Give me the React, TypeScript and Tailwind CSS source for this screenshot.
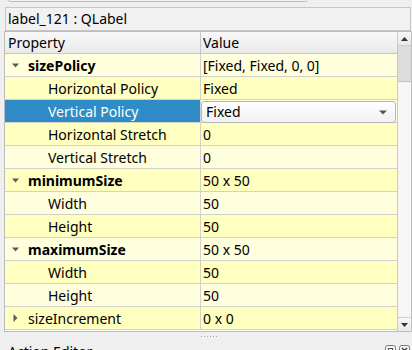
import React from "react"

type Row = {
    name: string
    value: string
    group?: "open" | "closed"
    bold?: boolean
    selected?: boolean
}

const rows: Row[] = [
    { name: "sizePolicy", value: "[Fixed, Fixed, 0, 0]", group: "open", bold: true },
    { name: "Horizontal Policy", value: "Fixed" },
    { name: "Vertical Policy", value: "Fixed", selected: true },
    { name: "Horizontal Stretch", value: "0" },
    { name: "Vertical Stretch", value: "0" },
    { name: "minimumSize", value: "50 x 50", group: "open", bold: true },
    { name: "Width", value: "50" },
    { name: "Height", value: "50" },
    { name: "maximumSize", value: "50 x 50", group: "open", bold: true },
    { name: "Width", value: "50" },
    { name: "Height", value: "50" },
    { name: "sizeIncrement", value: "0 x 0", group: "closed" },
]

function Arrow({ open }: { open: boolean }) {
    return open ? (
        <svg width="7" height="5" viewBox="0 0 7 5" className="block">
            <path d="M0 0.5 L7 0.5 L3.5 4.5 Z" fill="#5c5c5c" />
        </svg>
    ) : (
        <svg width="5" height="8" viewBox="0 0 5 8" className="block">
            <path d="M0.5 0 L4.5 4 L0.5 8 Z" fill="#5c5c5c" />
        </svg>
    )
}

function PropertyRow({ row, index }: { row: Row; index: number }) {
    const bg = index % 2 === 0 ? "bg-[#ffffde]" : "bg-[#ffffbf]"
    return (
        <div className={`flex h-[23px] border-b border-[#d2d2cc] ${bg}`}>
            {/* property name */}
            <div
                className={`flex w-[196px] shrink-0 border-r border-[#d2d2cc] ${
                    row.selected ? "bg-[#308cc6] text-white" : ""
                }`}
            >
                {row.group ? (
                    <>
                        <div className={`w-[23px] flex items-center ${row.group === "open" ? "pl-[7px]" : "pl-[8px]"}`}>
                            <Arrow open={row.group === "open"} />
                        </div>
                        <span className={`leading-[23px] h-[22px] ${row.bold ? "font-bold" : ""}`}>{row.name}</span>
                    </>
                ) : (
                    <span className="pl-[43px] leading-[23px] h-[22px]">{row.name}</span>
                )}
            </div>
            {/* value */}
            {row.selected ? (
                <div className="flex-1 pr-[1px] pt-[1px]">
                    <div className="h-[22px] flex items-center justify-between rounded-[3px] border border-[#b6b6b6] bg-gradient-to-b from-[#ffffff] to-[#f1f1f1] pl-[4px] pr-[8px]">
                        <span className="leading-[20px]">{row.value}</span>
                        <svg width="8" height="5" viewBox="0 0 8 5" className="block">
                            <path d="M0 0.5 L8 0.5 L4 4.5 Z" fill="#555" />
                        </svg>
                    </div>
                </div>
            ) : (
                <span className="flex-1 pl-[2px] leading-[23px] h-[22px]">{row.value}</span>
            )}
        </div>
    )
}

function ScrollBar() {
    return (
        <div className="w-[14px] shrink-0 flex flex-col border-l border-[#c8c8c8] bg-[#f6f6f6]">
            <div className="h-[14px] flex items-center justify-center bg-gradient-to-b from-[#f7f7f7] to-[#e9e9e9] border-b border-[#d0d0d0]">
                <svg width="7" height="4" viewBox="0 0 7 4" className="block">
                    <path d="M3.5 0 L7 4 L0 4 Z" fill="#333" />
                </svg>
            </div>
            <div className="h-[36px] bg-[#dcdcdc] border-b border-[#c4c4c4]" />
            <div className="flex-1" />
            <div className="h-[14px] flex items-center justify-center bg-gradient-to-b from-[#f7f7f7] to-[#e9e9e9] border-t border-[#d0d0d0]">
                <svg width="7" height="4" viewBox="0 0 7 4" className="block">
                    <path d="M0 0 L7 0 L3.5 4 Z" fill="#333" />
                </svg>
            </div>
        </div>
    )
}

export default function App() {
    return (
        <div className="w-[412px] h-[350px] overflow-hidden bg-[#efefef] font-['Noto_Sans',sans-serif] text-[14px] text-black flex flex-col">
            {/* bottom edge of the filter box above */}
            <div className="ml-[8px] w-[299px] h-[2px] border-b border-x border-[#bdbdbd] rounded-b-[2px] bg-[#f3f3f3] shrink-0" />

            {/* object name */}
            <div className="mt-[5px] ml-[5px] w-[406px] h-[24px] shrink-0 border border-[#c6c6c6] bg-[#f1f1f1] pl-[2px] leading-[22px]">
                label_121 : QLabel
            </div>

            {/* property tree */}
            <div className="ml-[4px] w-[408px] h-[301px] shrink-0 border border-[#bdbdbd] bg-white flex">
                <div className="flex-1 flex flex-col">
                    <div className="flex h-[22px] border-b border-[#c6c6c6] bg-gradient-to-b from-[#f8f8f8] to-[#eaeaea]">
                        <span className="w-[196px] border-r border-[#c6c6c6] pl-[3px] leading-[22px]">Property</span>
                        <span className="flex-1 pl-[2px] leading-[22px]">Value</span>
                    </div>
                    {rows.map((r, i) => (
                        <PropertyRow key={i} row={r} index={i} />
                    ))}
                </div>
                <ScrollBar />
            </div>

            {/* splitter handle */}
            <div className="h-[9px] shrink-0 flex items-center justify-center gap-[2px] pl-[6px]">
                {[0, 1, 2, 3, 4, 5].map(d => (
                    <span key={d} className="w-[1px] h-[1px] bg-[#a6a6a6]" />
                ))}
            </div>

            {/* next dock title */}
            <div className="flex items-start justify-between pl-[8px] pr-[2px]">
                <span className="leading-[20px] mt-[1px]">Action Editor</span>
                <div className="flex gap-[3px] mt-[4px]">
                    <svg width="11" height="11" viewBox="0 0 11 11" className="block">
                        <rect x="0.5" y="0.5" width="10" height="10" rx="2" fill="none" stroke="#7a7a7a" />
                        <rect x="3.5" y="3.5" width="4" height="4" fill="none" stroke="#555" />
                    </svg>
                    <svg width="11" height="11" viewBox="0 0 11 11" className="block">
                        <rect x="0.5" y="0.5" width="10" height="10" rx="2" fill="none" stroke="#7a7a7a" />
                        <path d="M3 3 L8 8 M8 3 L3 8" stroke="#444" strokeWidth="1.4" />
                    </svg>
                </div>
            </div>
        </div>
    )
}
